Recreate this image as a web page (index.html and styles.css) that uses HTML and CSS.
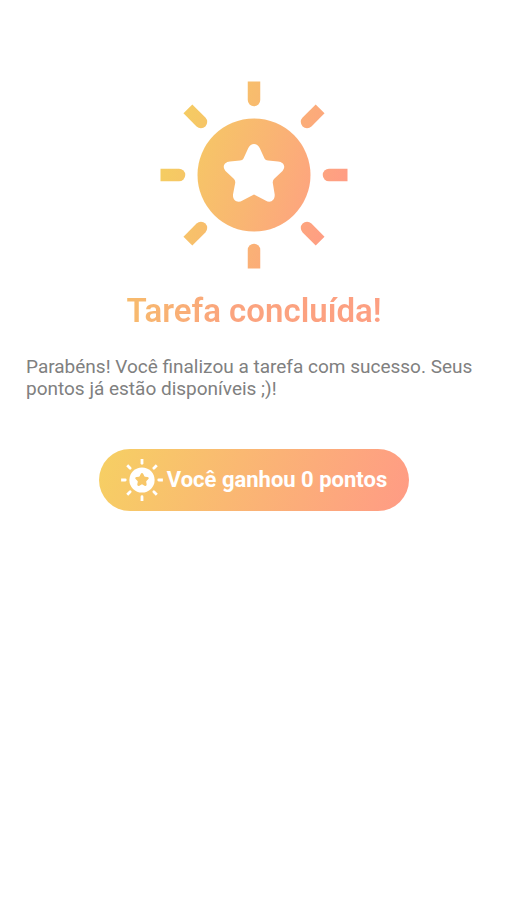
FILE: index.html
```html
<!DOCTYPE html>
<html lang="pt-BR">
<head>
<meta charset="utf-8">
<meta name="viewport" content="width=device-width, initial-scale=1">
<title>Tarefa concluída!</title>
<link rel="stylesheet" href="styles.css">
</head>
<body>
<main class="screen">
  <svg class="sun" viewBox="0 0 188 188" aria-hidden="true">
    <defs>
      <linearGradient id="warm" gradientUnits="userSpaceOnUse" x1="10" y1="68" x2="178" y2="120">
        <stop offset="0" stop-color="#f5cc62"/>
        <stop offset="0.5" stop-color="#f9b672"/>
        <stop offset="1" stop-color="#ff9d84"/>
      </linearGradient>
      <path id="ray" d="M87.750 .5h12.500v18.500a6.250 6.250 0 0 1-12.500 0z"/>
      <path id="star" d="M83.500 77.500L88.300 67Q90.500 63 94 63T99.700 67L104.500 77.500Q105.500 79.300 108 79.500L118 80.500C124 81 126 86 122.500 90L114 98Q112.500 99.500 112.800 102L114.700 113.500C115 119.500 110.500 122.500 105.500 119.500L94 113.500L82.500 119.500C77.500 122.500 72.500 119.500 73 113.500L75.200 102Q75.500 99.500 74 98L65.500 90C62 86 64 81 70 80.500L80 79.500Q82.500 79.300 83.500 77.500Z"/>
      <mask id="sun-shape" maskUnits="userSpaceOnUse" x="0" y="0" width="188" height="188">
        <g fill="#fff">
          <circle cx="94" cy="94" r="56.500"/>
          <use href="#ray"/>
          <use href="#ray" transform="rotate(45 94 94)"/>
          <use href="#ray" transform="rotate(90 94 94)"/>
          <use href="#ray" transform="rotate(135 94 94)"/>
          <use href="#ray" transform="rotate(180 94 94)"/>
          <use href="#ray" transform="rotate(225 94 94)"/>
          <use href="#ray" transform="rotate(270 94 94)"/>
          <use href="#ray" transform="rotate(315 94 94)"/>
        </g>
        <use href="#star" fill="#000"/>
      </mask>
    </defs>
    <rect width="188" height="188" fill="url(#warm)" mask="url(#sun-shape)"/>
  </svg>
  <h1 class="title">Tarefa concluída!</h1>
  <p class="message">Parabéns! Você finalizou a tarefa com sucesso. Seus pontos já estão disponíveis ;)!</p>
  <button class="reward" type="button">
    <svg class="reward-icon" viewBox="0 0 188 188" aria-hidden="true">
      <rect width="188" height="188" fill="#fff" mask="url(#sun-shape)"/>
    </svg>
    <span>Você ganhou 0 pontos</span>
  </button>
</main>
</body>
</html>
```
FILE: styles.css
```css
* {
  box-sizing: border-box;
}

body {
  margin: 0;
  background: #fff;
  font-family: Roboto, "Liberation Sans", sans-serif;
}

.screen {
  display: flex;
  flex-direction: column;
  align-items: center;
  padding: 81px 24px 32px 26px;
}

.sun {
  width: 188px;
  height: 188px;
}

.title {
  margin: 22px 0 0;
  font-size: 33px;
  line-height: 40px;
  font-weight: 600;
  color: transparent;
  background: linear-gradient(100deg, #f7bc6c, #fba47e 40%, #fd9f82);
  background-clip: text;
  -webkit-background-clip: text;
}

.message {
  align-self: stretch;
  margin: 25px 0 0;
  font-size: 19px;
  line-height: 22px;
  color: #808080;
}

.reward {
  display: flex;
  align-items: center;
  gap: 4px;
  height: 62px;
  margin: 49px 0 0;
  padding: 0 22px;
  border: 0;
  border-radius: 31px;
  color: #fff;
  background: linear-gradient(110deg, #f6d063, #fbb276 55%, #ff9b85);
  font-family: inherit;
  font-size: 22px;
  font-weight: 700;
  line-height: 28px;
}

.reward-icon {
  width: 42px;
  height: 42px;
}
```
